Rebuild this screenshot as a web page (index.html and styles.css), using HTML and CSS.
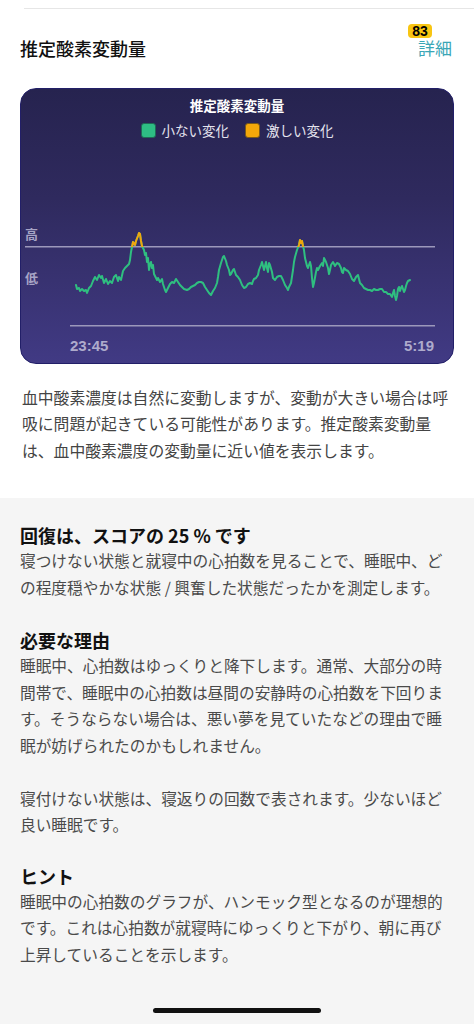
FILE: index.html
```html
<!DOCTYPE html>
<html lang="ja">
<head>
<meta charset="utf-8">
<meta name="viewport" content="width=device-width, initial-scale=1">
<link rel="stylesheet" href="styles.css">
<title>推定酸素変動量</title>
</head>
<body>
<div class="top-rule"></div>
<header class="header">
  <h1 class="title">推定酸素変動量</h1>
  <a class="detail">詳細<span class="badge">83</span></a>
</header>

<section class="card">
  <div class="card-title">推定酸素変動量</div>
  <div class="legend">
    <span class="legend-item"><span class="swatch swatch-green"></span>小ない変化</span>
    <span class="legend-item"><span class="swatch swatch-orange"></span>激しい変化</span>
  </div>
  <svg class="plot" width="432" height="224" viewBox="21 139 432 224" xmlns="http://www.w3.org/2000/svg">
    <defs>
      <clipPath id="above">
        <rect x="21" y="139" width="432" height="108"/>
      </clipPath>
    </defs>
    <text class="axis-label" x="25" y="239">高</text>
    <line x1="25" y1="246.7" x2="435" y2="246.7" class="grid"/>
    <text class="axis-label" x="25" y="283">低</text>
    <line x1="70" y1="325.7" x2="435" y2="325.7" class="grid"/>
    <polyline class="series series-green" points="76,285 77,289 79,288 80,291 82,289 84,291 86,290 87,293 89,288 91,286 93,281 95,277 97,280 99,275 101,278 102,276 104,283 106,279 108,284 110,281 112,283 114,277 116,275 118,281 119,277 121,280 123,271 125,268 127,266 129,264 130,260 131,252 132,247 133,242 135,245 136,241 138,236 139,233 140,234 141,241 142,246 144,250 145,255 146,253 147,262 148,258 149,270 150,264 151,262 152,268 153,265 154,274 155,276 157,280 158,278 160,282 162,279 163,284 165,290 166,292 168,288 170,284 172,282 174,283 176,279 178,282 180,285 182,287 184,289 187,290 189,289 191,287 193,286 195,285 197,283 199,282 201,282 203,283 205,287 207,290 209,293 211,295 213,291 215,288 217,283 218,277 219,270 221,263 223,257 224,256 226,261 227,265 229,270 230,275 231,274 233,270 234,269 236,275 238,277 240,280 242,285 244,288 246,287 248,284 250,283 252,284 253,281 254,279 256,278 258,275 259,270 261,265 262,262 263,266 264,270 265,266 266,262 267,268 268,272 269,263 270,265 272,272 273,278 275,280 277,277 279,276 281,276 283,280 285,285 287,288 288,290 289,287 291,283 293,270 294,262 295,257 297,250 299,245 300,240 301,243 302,241 303,246 304,250 305,258 306,262 307,266 308,268 310,262 311,266 312,278 313,287 314,283 316,272 317,268 318,270 320,266 322,263 323,266 324,258 326,262 328,268 329,274 330,270 331,265 333,262 335,266 337,263 339,264 341,268 342,272 343,273 344,268 346,270 348,271 350,274 352,279 354,281 356,277 358,275 360,283 362,285 364,288 366,289 368,290 370,290 372,291 374,289 376,290 378,290 380,289 382,289 384,292 386,292 388,294 390,294 392,297 393,293 394,290 395,296 396,300 397,296 398,289 399,287 400,291 401,288 402,286 403,289 404,292 405,290 406,286 407,283 408,281 410,280"/>
    <polyline class="series series-orange" clip-path="url(#above)" points="129,264 130,260 131,252 132,247 133,242 135,245 136,241 138,236 139,233 140,234 141,241 142,246 144,250 145,255"/>
    <polyline class="series series-orange" clip-path="url(#above)" points="295,257 297,250 299,245 300,240 301,243 302,241 303,246 304,250 305,258"/>
    <text class="time-label" x="70" y="351">23:45</text>
    <text class="time-label" x="434" y="351" text-anchor="end">5:19</text>
  </svg>
</section>

<p class="intro">血中酸素濃度は自然に変動しますが、変動が大きい場合は呼吸に問題が起きている可能性があります。推定酸素変動量は、血中酸素濃度の変動量に近い値を表示します。</p>

<main class="info">
  <section class="info-block">
    <h2 class="info-heading">回復は、スコアの 25 % です</h2>
    <p class="info-text">寝つけない状態と就寝中の心拍数を見ることで、睡眠中、どの程度穏やかな状態 / 興奮した状態だったかを測定します。</p>
  </section>
  <section class="info-block">
    <h2 class="info-heading">必要な理由</h2>
    <p class="info-text">睡眠中、心拍数はゆっくりと降下します。通常、大部分の時間帯で、睡眠中の心拍数は昼間の安静時の心拍数を下回ります。そうならない場合は、悪い夢を見ていたなどの理由で睡眠が妨げられたのかもしれません。</p>
    <p class="info-text info-text-gap">寝付けない状態は、寝返りの回数で表されます。少ないほど良い睡眠です。</p>
  </section>
  <section class="info-block info-block-last">
    <h2 class="info-heading">ヒント</h2>
    <p class="info-text">睡眠中の心拍数のグラフが、ハンモック型となるのが理想的です。これは心拍数が就寝時にゆっくりと下がり、朝に再び上昇していることを示します。</p>
  </section>
  <div class="home-indicator"></div>
</main>
</body>
</html>
```

FILE: styles.css
```css
* { box-sizing: border-box; }

html, body {
  margin: 0;
  padding: 0;
  background: #ffffff;
  font-family: "Noto Sans CJK JP", "Noto Sans", sans-serif;
  color: #111;
}

.top-rule {
  margin: 8px 0 0 24px;
  height: 1px;
  background: #e6e6e6;
}

.header {
  display: flex;
  justify-content: space-between;
  align-items: center;
  padding: 26px 22px 0 20px;
  height: 52px;
}

.title {
  margin: 0;
  font-size: 18px;
  line-height: 26px;
  font-weight: 500;
  color: #111;
}

.detail {
  position: relative;
  font-size: 17px;
  line-height: 18px;
  color: #3aa6b6;
  text-decoration: none;
}

.badge {
  position: absolute;
  top: -15px;
  left: -10px;
  width: 24px;
  height: 14px;
  border-radius: 4px;
  background: #f8c512;
  color: #000;
  font-family: "Liberation Sans", Arial, sans-serif;
  font-weight: 700;
  font-size: 14px;
  line-height: 14px;
  text-align: center;
}

.card {
  margin: 27px 20px 0;
  height: 276px;
  border: 1px solid #221f68;
  border-radius: 16px;
  background: linear-gradient(180deg, #26234f 0%, #2f2a5e 40%, #413a84 100%);
  padding-top: 7px;
  overflow: hidden;
}

.card-title {
  text-align: center;
  color: #ffffff;
  font-size: 13.5px;
  line-height: 18px;
  font-weight: 700;
}

.legend {
  margin-top: 7px;
  display: flex;
  justify-content: center;
  gap: 16px;
  height: 18px;
}

.legend-item {
  display: flex;
  align-items: center;
  gap: 6px;
  color: #e4e3ee;
  font-size: 13.5px;
  line-height: 18px;
}

.swatch {
  width: 15px;
  height: 15px;
  border-radius: 3px;
}

.swatch-green {
  background: #2ebd84;
  border: 1px solid #1f6b56;
}

.swatch-orange {
  background: #f3a70a;
  border: 1px solid #7a5a1a;
}

.plot {
  display: block;
}

.grid {
  stroke: #9c98bb;
  stroke-width: 1.6;
}

.axis-label {
  fill: #a7a4c6;
  font-family: "Noto Sans CJK JP", sans-serif;
  font-size: 13px;
  font-weight: 700;
}

.time-label {
  fill: #aeabcc;
  font-family: "Liberation Sans", Arial, sans-serif;
  font-size: 15px;
  font-weight: 700;
}

.series {
  fill: none;
  stroke-width: 2;
  stroke-linejoin: round;
  stroke-linecap: round;
}

.series-green {
  stroke: #2fbf80;
}

.series-orange {
  stroke: #f2a50c;
}

.intro {
  margin: 20.75px 0 0;
  padding: 0 22px;
  font-size: 15.8px;
  line-height: 26.5px;
  color: #444;
}

.info {
  margin: 33.75px 0 0;
  padding: 24px 20px 11px;
  background: #f5f5f5;
}

.info-block + .info-block {
  margin-top: 26px;
}

.info-block-last {
  margin-top: 24px !important;
}

.info-heading {
  margin: 0;
  font-size: 18px;
  line-height: 26px;
  font-weight: 700;
  color: #111;
}

.info-text {
  margin: 0;
  font-size: 15.7px;
  line-height: 26.5px;
  color: #4a4a4a;
}

.info-text-gap {
  margin-top: 26.5px;
}

.home-indicator {
  margin: 40px auto 0;
  width: 168px;
  height: 5px;
  border-radius: 3px;
  background: #111;
}
```
